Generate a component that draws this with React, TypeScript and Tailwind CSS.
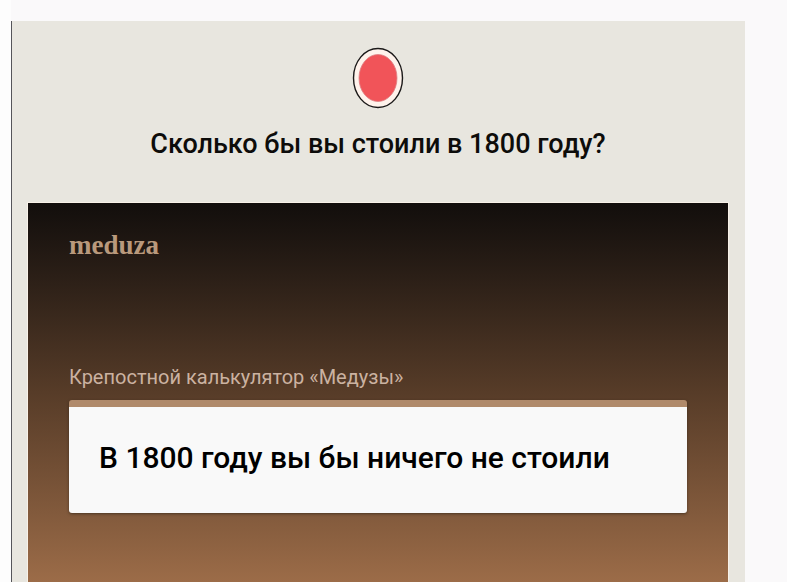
function RecordMark() {
  return (
    <svg width="52" height="62" viewBox="0 0 52 62" aria-hidden="true">
      <ellipse cx="26" cy="31" rx="24.5" ry="29.5" fill="#fff3ec" stroke="#1c1a1a" strokeWidth="1.4" />
      <ellipse cx="26" cy="31" rx="19" ry="23.5" fill="#f15459" stroke="#dd7f83" strokeWidth="0.8" />
    </svg>
  );
}

function ResultCard() {
  return (
    <section className="rounded-[3px] border-t-[7px] border-[#b08a6b] bg-[#f9f9f9] px-[30px] pt-[30px] pb-[34px] shadow-[0_1px_3px_rgba(40,30,20,0.6)]">
      <h2 className="text-[30px] leading-[42px] font-medium whitespace-nowrap text-black">
        В 1800 году вы бы ничего не стоили
      </h2>
    </section>
  );
}

export default function App() {
  return (
    <div className="flex min-h-screen bg-[#faf9fa] pt-[21px] font-['Roboto','Noto_Sans',sans-serif]">
      <div className="-mt-[21px] w-[11px] shrink-0 bg-[#fdfdfd]" />
      <main className="flex min-w-0 flex-1 flex-col border-l border-[#55555a] bg-[#e8e6df] pr-[17px] pl-4 pt-[26px]">
        <header className="flex flex-col items-center gap-[15px] pb-[39px]">
          <RecordMark />
          <h1 className="text-[27px] leading-10 font-medium whitespace-nowrap text-[#0d0c0a]">
            Сколько бы вы стоили в 1800 году?
          </h1>
        </header>
        <article className="flex-1 bg-linear-to-b from-[#120e0c] via-[#573c28] via-50% to-[#9c6c48] px-[41px] pt-6 ring-1 ring-[#f8f1e8]">
          <p className="font-['Liberation_Serif',serif] text-[27px] leading-9 font-bold text-[#b9997c]">
            meduza
          </p>
          <p className="mt-[100px] mb-[9px] text-[20px] leading-7 text-[#cbb2a1]">
            Крепостной калькулятор «Медузы»
          </p>
          <ResultCard />
        </article>
      </main>
      <div className="-mt-[21px] flex w-[55px] shrink-0 justify-end">
        <div className="w-[13px] bg-white" />
      </div>
    </div>
  );
}
